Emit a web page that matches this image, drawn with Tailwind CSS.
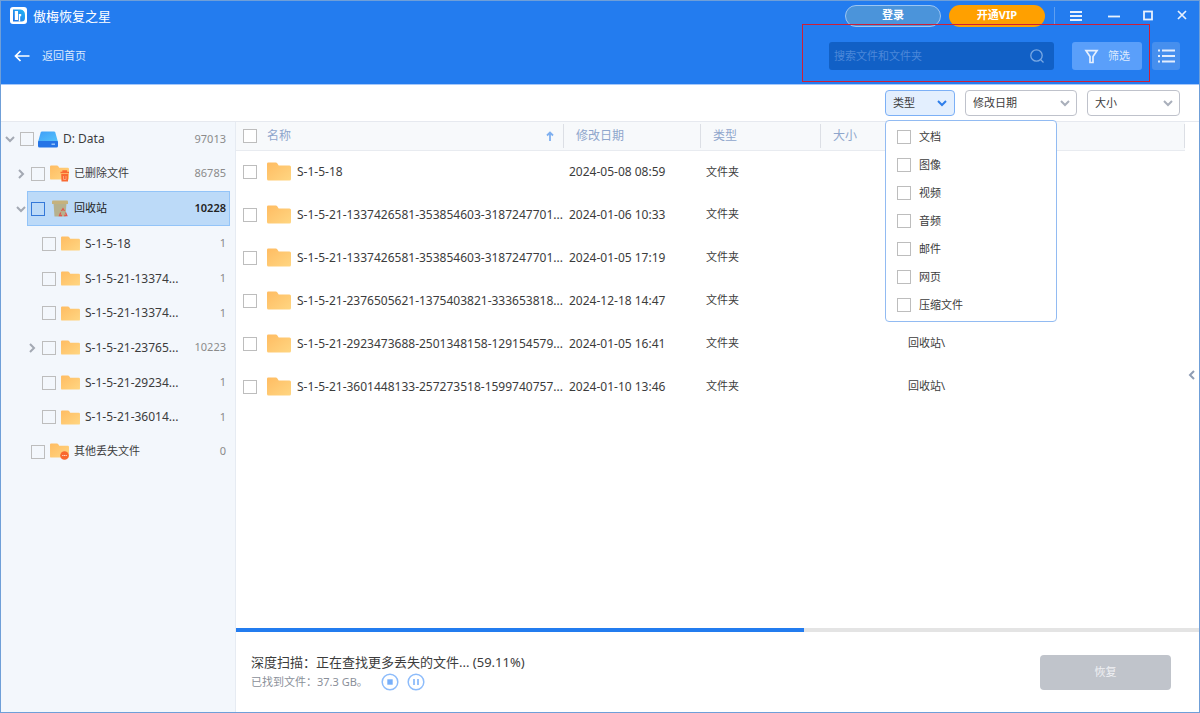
<!DOCTYPE html>
<html lang="zh-CN">
<head>
<meta charset="utf-8">
<meta name="viewport" content="width=device-width, initial-scale=1">
<title>傲梅恢复之星</title>
<script src="https://cdn.jsdelivr.net/npm/@tailwindcss/browser@4"></script>
</head>
<body class="flex min-h-screen flex-col border border-[#6f9fd8] bg-white font-['Noto_Sans','Noto_Sans_CJK_SC',sans-serif] text-[11px] text-[#3c3c3c]">

<!-- Shared icons -->
<svg class="absolute size-0" aria-hidden="true">
  <defs>
    <linearGradient id="gold" x1="0" y1="0" x2="1" y2="1"><stop offset="0" stop-color="#ffbc62"/><stop offset="1" stop-color="#ffd682"/></linearGradient>
    <linearGradient id="disk-top" x1="0" y1="0" x2="1" y2="1"><stop offset="0" stop-color="#3f9df8"/><stop offset="1" stop-color="#55c4fb"/></linearGradient>
    <linearGradient id="logo" x1="0" y1="1" x2="1" y2="0"><stop offset="0" stop-color="#1f6fe8"/><stop offset="1" stop-color="#22b8f5"/></linearGradient>
    <symbol id="folder" viewBox="0 0 24 19"><path d="M0 1.8Q0 .5 1.3.5h7.6q.8 0 1.3.8L11.7 3.500h10.800Q24 3.500 24 5v12q0 1.500-1.500 1.500h-21Q0 18.500 0 17z" fill="url(#gold)"/></symbol>
    <symbol id="down" viewBox="0 0 10 8"><path d="M1 2l4 4 4-4" fill="none" stroke="currentColor" stroke-width="2"/></symbol>
    <symbol id="right" viewBox="0 0 8 10"><path d="M2 1l4 4-4 4" fill="none" stroke="currentColor" stroke-width="2"/></symbol>
  </defs>
</svg>

<header class="relative border-b border-[#a5c8fa] bg-[#237cef] text-white">
  <div class="flex h-[29px] items-center justify-between pl-[9px] pr-[11px]">
    <div class="flex items-center gap-[6px]">
      <svg class="size-[17px]" viewBox="0 0 17 17" aria-hidden="true"><rect width="17" height="17" rx="3" fill="#fff"/><path d="M3 2.500h7.500q4.500.5 4.500 5.500v3q0 3.500-3.500 3.500H3z" fill="url(#logo)"/><path d="M4.800 4H8v9H4.800z" fill="#fff"/><path d="M8.800 7h2.400v2.300h-1V14.500H8.800z" fill="#fff"/></svg>
      <h1 class="text-[13px] leading-5">傲梅恢复之星</h1>
    </div>
    <div class="flex items-center">
      <button class="h-[22px] w-24 rounded-full border border-[#9cc5f2] bg-[#4b94da] text-[11px] font-bold">登录</button>
      <button class="ml-2 h-[22px] w-24 rounded-full bg-[#ffa000] text-[11px] font-bold">开通VIP</button>
      <span class="ml-[9px] h-[17px] w-px bg-[#5f9ff0]"></span>
      <button class="ml-[15px]" aria-label="菜单"><svg class="block size-3" viewBox="0 0 12 12"><path d="M0 2h12M0 6h12M0 10h12" stroke="#e8f1fd" stroke-width="2"/></svg></button>
      <button class="ml-[26px]" aria-label="最小化"><svg class="block size-3" viewBox="0 0 12 12"><path d="M0 6.500h12" stroke="#e8f1fd" stroke-width="1.800"/></svg></button>
      <button class="ml-[22px]" aria-label="最大化"><svg class="block size-3" viewBox="0 0 12 12"><rect x="2" y="1.500" width="8" height="8" fill="none" stroke="#e8f1fd" stroke-width="1.800"/></svg></button>
      <button class="ml-[22px]" aria-label="关闭"><svg class="block size-3" viewBox="0 0 12 12"><path d="M2 1l8 8M10 1l-8 8" stroke="#e8f1fd" stroke-width="1.700"/></svg></button>
    </div>
  </div>
  <div class="flex h-[54px] items-center justify-between pb-[2px] pl-[13px] pr-[19px]">
    <button class="flex items-center gap-3 text-[#dbe9fd]"><svg class="h-3 w-4" viewBox="0 0 16 12" aria-hidden="true"><path d="M15.500 6H1.500M6.500 1l-5 5 5 5" fill="none" stroke="#fff" stroke-width="1.700"/></svg>返回首页</button>
    <div class="flex items-center">
      <div class="flex h-7 w-[225px] items-center rounded-[3px] bg-[#1160c6] pl-[5px] pr-[9px]">
        <input type="search" aria-label="搜索文件和文件夹" placeholder="搜索文件和文件夹" class="min-w-0 flex-1 bg-transparent text-[11px] outline-none placeholder:text-[#4c88d9]">
        <svg class="size-4" viewBox="0 0 16 16" aria-hidden="true"><circle cx="7.500" cy="7.500" r="5.700" fill="none" stroke="#78a8e4" stroke-width="1.300"/><path d="M11.500 11.500l3 3" stroke="#78a8e4" stroke-width="1.300"/></svg>
      </div>
      <button class="ml-[18px] flex h-7 w-[70px] items-center justify-center gap-[9px] rounded-[3px] bg-[#5a9ffa] text-[#dceafe]"><svg class="size-[15px]" viewBox="0 0 15 15" aria-hidden="true"><path d="M2 1.700h11L9 7.500V13.500H6V7.500z" fill="none" stroke="#e6f0fe" stroke-width="1.700"/></svg>筛选</button>
      <button class="ml-[10px] flex size-7 items-center justify-center rounded-[3px] bg-[#468fee]" aria-label="列表视图"><svg class="h-[14px] w-[17px]" viewBox="0 0 17 14"><path d="M4 1.500h13M4 7h13M4 12.500h13" stroke="#e3eefd" stroke-width="1.800"/><path d="M0 1.500h2M0 7h2M0 12.500h2" stroke="#e3eefd" stroke-width="1.800"/></svg></button>
    </div>
  </div>
  <!-- Highlight frame round search and filter -->
  <div class="pointer-events-none absolute right-[49px] top-[23px] h-[58px] w-[348px] border border-[#cf1f37]"></div>
</header>

<section class="flex h-9 items-center justify-end gap-[10px] pr-[19px]" aria-label="筛选条件">
  <div class="relative">
    <button aria-expanded="true" aria-controls="type-menu" class="flex h-[26px] w-[70px] items-center justify-between rounded-[4px] border border-[#7cb0f6] bg-[#e3effe] pl-[7px] pr-[7px] text-[11px]">类型<svg class="h-2 w-[10px] text-[#2e7eea]"><use href="#down"/></svg></button>
    <div id="type-menu" class="absolute left-0 top-full z-10 mt-1 w-[172px] rounded-[4px] border border-[#92bbf2] bg-white py-[2px] pl-[11px]">
      <label class="flex h-7 items-center gap-2"><input type="checkbox" class="size-[14px] appearance-none border border-[#bdbdbd] bg-white">文档</label>
      <label class="flex h-7 items-center gap-2"><input type="checkbox" class="size-[14px] appearance-none border border-[#bdbdbd] bg-white">图像</label>
      <label class="flex h-7 items-center gap-2"><input type="checkbox" class="size-[14px] appearance-none border border-[#bdbdbd] bg-white">视频</label>
      <label class="flex h-7 items-center gap-2"><input type="checkbox" class="size-[14px] appearance-none border border-[#bdbdbd] bg-white">音频</label>
      <label class="flex h-7 items-center gap-2"><input type="checkbox" class="size-[14px] appearance-none border border-[#bdbdbd] bg-white">邮件</label>
      <label class="flex h-7 items-center gap-2"><input type="checkbox" class="size-[14px] appearance-none border border-[#bdbdbd] bg-white">网页</label>
      <label class="flex h-7 items-center gap-2"><input type="checkbox" class="size-[14px] appearance-none border border-[#bdbdbd] bg-white">压缩文件</label>
    </div>
  </div>
  <div class="relative">
    <select aria-label="修改日期" class="block h-[26px] w-[112px] appearance-none rounded-[4px] border border-[#bfc2cb] bg-white pl-[7px] text-[11px]"><option>修改日期</option></select>
    <svg class="pointer-events-none absolute right-[7px] top-[9px] h-2 w-[10px] text-[#a9afbb]" aria-hidden="true"><use href="#down"/></svg>
  </div>
  <div class="relative">
    <select aria-label="大小" class="block h-[26px] w-[93px] appearance-none rounded-[4px] border border-[#bfc2cb] bg-white pl-[7px] text-[11px]"><option>大小</option></select>
    <svg class="pointer-events-none absolute right-[7px] top-[9px] h-2 w-[10px] text-[#a9afbb]" aria-hidden="true"><use href="#down"/></svg>
  </div>
</section>

<div class="flex flex-1 border-t border-[#e6e9ef]">
  <aside class="w-[235px] shrink-0 border-r border-[#e6ebf2] bg-[#f3f7fc] pr-[5px]">
    <ul class="text-[12px]">
      <li class="flex h-[34px] items-center pl-[3px]">
        <button class="flex w-3 justify-center text-[#a3a9b3]" aria-label="收起"><svg class="h-2 w-[10px]"><use href="#down"/></svg></button>
        <div class="flex flex-1 items-center border border-transparent px-[3px]">
          <label class="flex flex-1 items-center"><input type="checkbox" class="mr-1 size-[14px] appearance-none border border-[#bdbdbd]">
          <svg class="mr-[5px] h-[17px] w-5" viewBox="0 0 20 17" aria-hidden="true"><path d="M4 .5h12q1 0 1.300 1L20 11H0L2.700 1.500Q3 .5 4 .5z" fill="url(#disk-top)"/><path d="M0 11q0-1 1-1h18q1 0 1 1v4q0 1.500-1.500 1.500h-17Q0 16.500 0 15z" fill="#2574e6"/><path d="M13.500 13.200h3.500" stroke="#a8cffb" stroke-width="1.300"/></svg>D: Data</label>
          <span class="text-[11px] text-[#8b8b8b]">97013</span>
        </div>
      </li>
      <li class="flex h-[35px] items-center pl-[14px]">
        <button class="flex w-3 justify-center text-[#a3a9b3]" aria-label="展开"><svg class="h-[10px] w-2"><use href="#right"/></svg></button>
        <div class="flex flex-1 items-center border border-transparent px-[3px]">
          <label class="flex flex-1 items-center text-[11px]"><input type="checkbox" class="mr-[5px] size-[14px] appearance-none border border-[#bdbdbd]">
          <svg class="mr-[5px] h-[17px] w-[19px]" viewBox="0 0 19 17" aria-hidden="true"><use href="#folder" width="19" height="15"/><path d="M10.500 7.500h8.500M13 7V6h3.500v1" stroke="#f96a32" stroke-width="1.300" fill="none"/><path d="M11.200 9h7.100l-.3 7.500h-6.500z" fill="#f96a32"/><path d="M13.500 11v3.500h2.500V11" fill="none" stroke="#ffb18b" stroke-width=".8"/></svg>已删除文件</label>
          <span class="text-[11px] text-[#8b8b8b]">86785</span>
        </div>
      </li>
      <li class="flex h-[35px] items-center pl-[14px]">
        <button class="flex w-3 justify-center text-[#a3a9b3]" aria-label="收起"><svg class="h-2 w-[10px]"><use href="#down"/></svg></button>
        <div class="flex h-full flex-1 items-center border border-[#93c4f8] bg-[#bcdaf8] px-[3px] text-[#222]">
          <label class="flex flex-1 items-center text-[11px]"><input type="checkbox" class="mr-[7px] size-[14px] appearance-none border border-[#3478d8]">
          <svg class="mr-[6px] h-[17px] w-4" viewBox="0 0 16 17" aria-hidden="true"><path d="M1.500 3h13l-1 13.500h-11z" fill="#b6b18e"/><path d="M1 .5h14q1 0 1 1V4H0V1.500q0-1 1-1z" fill="#c5b27d"/><path d="M9.500 11l1.500-2.300 1.500 2.300M13.500 12.500l1.300 3h-2.600M10 15.500H7.500l1.200-3" fill="none" stroke="#e0584d" stroke-width="1.300"/></svg>回收站</label>
          <span class="text-[11px] font-semibold">10228</span>
        </div>
      </li>
      <li class="flex h-[35px] items-center pl-[37px]">
        <div class="flex flex-1 items-center border border-transparent px-[3px]">
          <label class="flex flex-1 items-center"><input type="checkbox" class="mr-[5px] size-[14px] appearance-none border border-[#bdbdbd]"><svg class="mr-[5px] h-[15px] w-[19px]"><use href="#folder"/></svg>S-1-5-18</label>
          <span class="text-[11px] text-[#8b8b8b]">1</span>
        </div>
      </li>
      <li class="flex h-[35px] items-center pl-[37px]">
        <div class="flex flex-1 items-center border border-transparent px-[3px]">
          <label class="flex flex-1 items-center"><input type="checkbox" class="mr-[5px] size-[14px] appearance-none border border-[#bdbdbd]"><svg class="mr-[5px] h-[15px] w-[19px]"><use href="#folder"/></svg>S-1-5-21-13374...</label>
          <span class="text-[11px] text-[#8b8b8b]">1</span>
        </div>
      </li>
      <li class="flex h-[34px] items-center pl-[37px]">
        <div class="flex flex-1 items-center border border-transparent px-[3px]">
          <label class="flex flex-1 items-center"><input type="checkbox" class="mr-[5px] size-[14px] appearance-none border border-[#bdbdbd]"><svg class="mr-[5px] h-[15px] w-[19px]"><use href="#folder"/></svg>S-1-5-21-13374...</label>
          <span class="text-[11px] text-[#8b8b8b]">1</span>
        </div>
      </li>
      <li class="flex h-[35px] items-center pl-[25px]">
        <button class="flex w-3 justify-center text-[#a3a9b3]" aria-label="展开"><svg class="h-[10px] w-2"><use href="#right"/></svg></button>
        <div class="flex flex-1 items-center border border-transparent px-[3px]">
          <label class="flex flex-1 items-center"><input type="checkbox" class="mr-[5px] size-[14px] appearance-none border border-[#bdbdbd]"><svg class="mr-[5px] h-[15px] w-[19px]"><use href="#folder"/></svg>S-1-5-21-23765...</label>
          <span class="text-[11px] text-[#8b8b8b]">10223</span>
        </div>
      </li>
      <li class="flex h-[35px] items-center pl-[37px]">
        <div class="flex flex-1 items-center border border-transparent px-[3px]">
          <label class="flex flex-1 items-center"><input type="checkbox" class="mr-[5px] size-[14px] appearance-none border border-[#bdbdbd]"><svg class="mr-[5px] h-[15px] w-[19px]"><use href="#folder"/></svg>S-1-5-21-29234...</label>
          <span class="text-[11px] text-[#8b8b8b]">1</span>
        </div>
      </li>
      <li class="flex h-[34px] items-center pl-[37px]">
        <div class="flex flex-1 items-center border border-transparent px-[3px]">
          <label class="flex flex-1 items-center"><input type="checkbox" class="mr-[5px] size-[14px] appearance-none border border-[#bdbdbd]"><svg class="mr-[5px] h-[15px] w-[19px]"><use href="#folder"/></svg>S-1-5-21-36014...</label>
          <span class="text-[11px] text-[#8b8b8b]">1</span>
        </div>
      </li>
      <li class="flex h-[35px] items-center pl-[26px]">
        <div class="flex flex-1 items-center border border-transparent px-[3px]">
          <label class="flex flex-1 items-center text-[11px]"><input type="checkbox" class="mr-[5px] size-[14px] appearance-none border border-[#bdbdbd]">
          <svg class="mr-[5px] h-[17px] w-[19px]" viewBox="0 0 19 17" aria-hidden="true"><use href="#folder" width="19" height="15"/><circle cx="14.500" cy="12.500" r="4.300" fill="#f9692f"/><path d="M12.200 12.500h4.600" stroke="#ffd9c6" stroke-width="1.200" stroke-dasharray="1.200 .5"/></svg>其他丢失文件</label>
          <span class="text-[11px] text-[#8b8b8b]">0</span>
        </div>
      </li>
    </ul>
  </aside>

  <main class="flex min-w-0 flex-1 flex-col">
    <div class="flex flex-1">
      <div class="min-w-0 flex-1">
        <table class="w-full table-fixed border-collapse text-left">
          <colgroup><col class="w-[328px]"><col class="w-[137px]"><col class="w-[120px]"><col class="w-[82px]"><col></colgroup>
          <thead class="h-7 border-b border-[#e8ebf0] bg-[#f7f9fb] text-[12px] text-[#8fa6cc]">
            <tr>
              <th class="p-0 font-normal"><div class="flex h-6 items-center border-r border-[#dcdfe5] pl-[7px] pr-[9px]"><input type="checkbox" aria-label="全选" class="mr-[10px] size-[14px] appearance-none border border-[#bdbdbd] bg-white"><span class="flex-1">名称</span><svg class="h-[10px] w-2" viewBox="0 0 8 10" aria-hidden="true"><path d="M4 10V1.500M1 4.500l3-3 3 3" fill="none" stroke="#7fb0f0" stroke-width="1.800"/></svg></div></th>
              <th class="p-0 font-normal"><div class="flex h-6 items-center border-r border-[#dcdfe5] pl-3">修改日期</div></th>
              <th class="p-0 font-normal"><div class="flex h-6 items-center border-r border-[#dcdfe5] pl-3">类型</div></th>
              <th class="p-0 font-normal"><div class="flex h-6 items-center border-r border-[#dcdfe5] pl-3">大小</div></th>
              <th class="p-0 font-normal"><div class="h-6 border-r border-[#dcdfe5]"></div></th>
            </tr>
          </thead>
          <tbody>
            <tr class="h-[43px]"><td class="p-0"><label class="flex items-center pl-[7px] text-[12px]"><input type="checkbox" class="mr-[10px] size-[14px] appearance-none border border-[#bdbdbd]"><svg class="mr-[6px] h-[19px] w-6"><use href="#folder"/></svg>S-1-5-18</label></td><td class="p-0 pl-[5px] text-[12px]">2024-05-08 08:59</td><td class="p-0 pl-[5px]">文件夹</td><td></td><td></td></tr>
            <tr class="h-[43px]"><td class="p-0"><label class="flex items-center pl-[7px] text-[12px]"><input type="checkbox" class="mr-[10px] size-[14px] appearance-none border border-[#bdbdbd]"><svg class="mr-[6px] h-[19px] w-6"><use href="#folder"/></svg>S-1-5-21-1337426581-353854603-3187247701...</label></td><td class="p-0 pl-[5px] text-[12px]">2024-01-06 10:33</td><td class="p-0 pl-[5px]">文件夹</td><td></td><td></td></tr>
            <tr class="h-[43px]"><td class="p-0"><label class="flex items-center pl-[7px] text-[12px]"><input type="checkbox" class="mr-[10px] size-[14px] appearance-none border border-[#bdbdbd]"><svg class="mr-[6px] h-[19px] w-6"><use href="#folder"/></svg>S-1-5-21-1337426581-353854603-3187247701...</label></td><td class="p-0 pl-[5px] text-[12px]">2024-01-05 17:19</td><td class="p-0 pl-[5px]">文件夹</td><td></td><td></td></tr>
            <tr class="h-[43px]"><td class="p-0"><label class="flex items-center pl-[7px] text-[12px]"><input type="checkbox" class="mr-[10px] size-[14px] appearance-none border border-[#bdbdbd]"><svg class="mr-[6px] h-[19px] w-6"><use href="#folder"/></svg>S-1-5-21-2376505621-1375403821-333653818...</label></td><td class="p-0 pl-[5px] text-[12px]">2024-12-18 14:47</td><td class="p-0 pl-[5px]">文件夹</td><td></td><td></td></tr>
            <tr class="h-[43px]"><td class="p-0"><label class="flex items-center pl-[7px] text-[12px]"><input type="checkbox" class="mr-[10px] size-[14px] appearance-none border border-[#bdbdbd]"><svg class="mr-[6px] h-[19px] w-6"><use href="#folder"/></svg>S-1-5-21-2923473688-2501348158-129154579...</label></td><td class="p-0 pl-[5px] text-[12px]">2024-01-05 16:41</td><td class="p-0 pl-[5px]">文件夹</td><td></td><td class="p-0 pl-[5px]">回收站\</td></tr>
            <tr class="h-[43px]"><td class="p-0"><label class="flex items-center pl-[7px] text-[12px]"><input type="checkbox" class="mr-[10px] size-[14px] appearance-none border border-[#bdbdbd]"><svg class="mr-[6px] h-[19px] w-6"><use href="#folder"/></svg>S-1-5-21-3601448133-257273518-1599740757...</label></td><td class="p-0 pl-[5px] text-[12px]">2024-01-10 13:46</td><td class="p-0 pl-[5px]">文件夹</td><td></td><td class="p-0 pl-[5px]">回收站\</td></tr>
          </tbody>
        </table>
      </div>
      <button class="flex w-[14px] items-center justify-center self-stretch text-[#8f9db4]" aria-label="展开详情"><svg class="h-[10px] w-2 rotate-180"><use href="#right"/></svg></button>
    </div>

    <div class="h-1 bg-[#e4e4e4]" role="progressbar" aria-label="扫描进度" aria-valuenow="59" aria-valuemin="0" aria-valuemax="100"><div class="h-1 bg-[#237cef]" style="width:59%"></div></div>
    <footer class="flex h-20 items-center justify-between pl-[15px] pr-7">
      <div>
        <p class="text-[13px] leading-5">深度扫描：正在查找更多丢失的文件... (59.11%)</p>
        <div class="flex h-5 items-center text-[#8a8f99]">
          <span>已找到文件：37.3 GB。</span>
          <button class="ml-[13px]" aria-label="停止"><svg class="block size-[18px]" viewBox="0 0 18 18"><circle cx="9" cy="9" r="7.800" fill="none" stroke="#8dbcfb" stroke-width="1.500"/><path d="M6.300 6.300h5.400v5.400H6.300z" fill="#77affa"/></svg></button>
          <button class="ml-2" aria-label="暂停"><svg class="block size-[18px]" viewBox="0 0 18 18"><circle cx="9" cy="9" r="7.800" fill="none" stroke="#8dbcfb" stroke-width="1.500"/><path d="M7 6v6M11 6v6" stroke="#77affa" stroke-width="1.500"/></svg></button>
        </div>
      </div>
      <button disabled class="h-[35px] w-[131px] rounded-[4px] bg-[#c0c4cb] text-[11px] text-[#f0f1f4]">恢复</button>
    </footer>
  </main>
</div>
</body>
</html>
